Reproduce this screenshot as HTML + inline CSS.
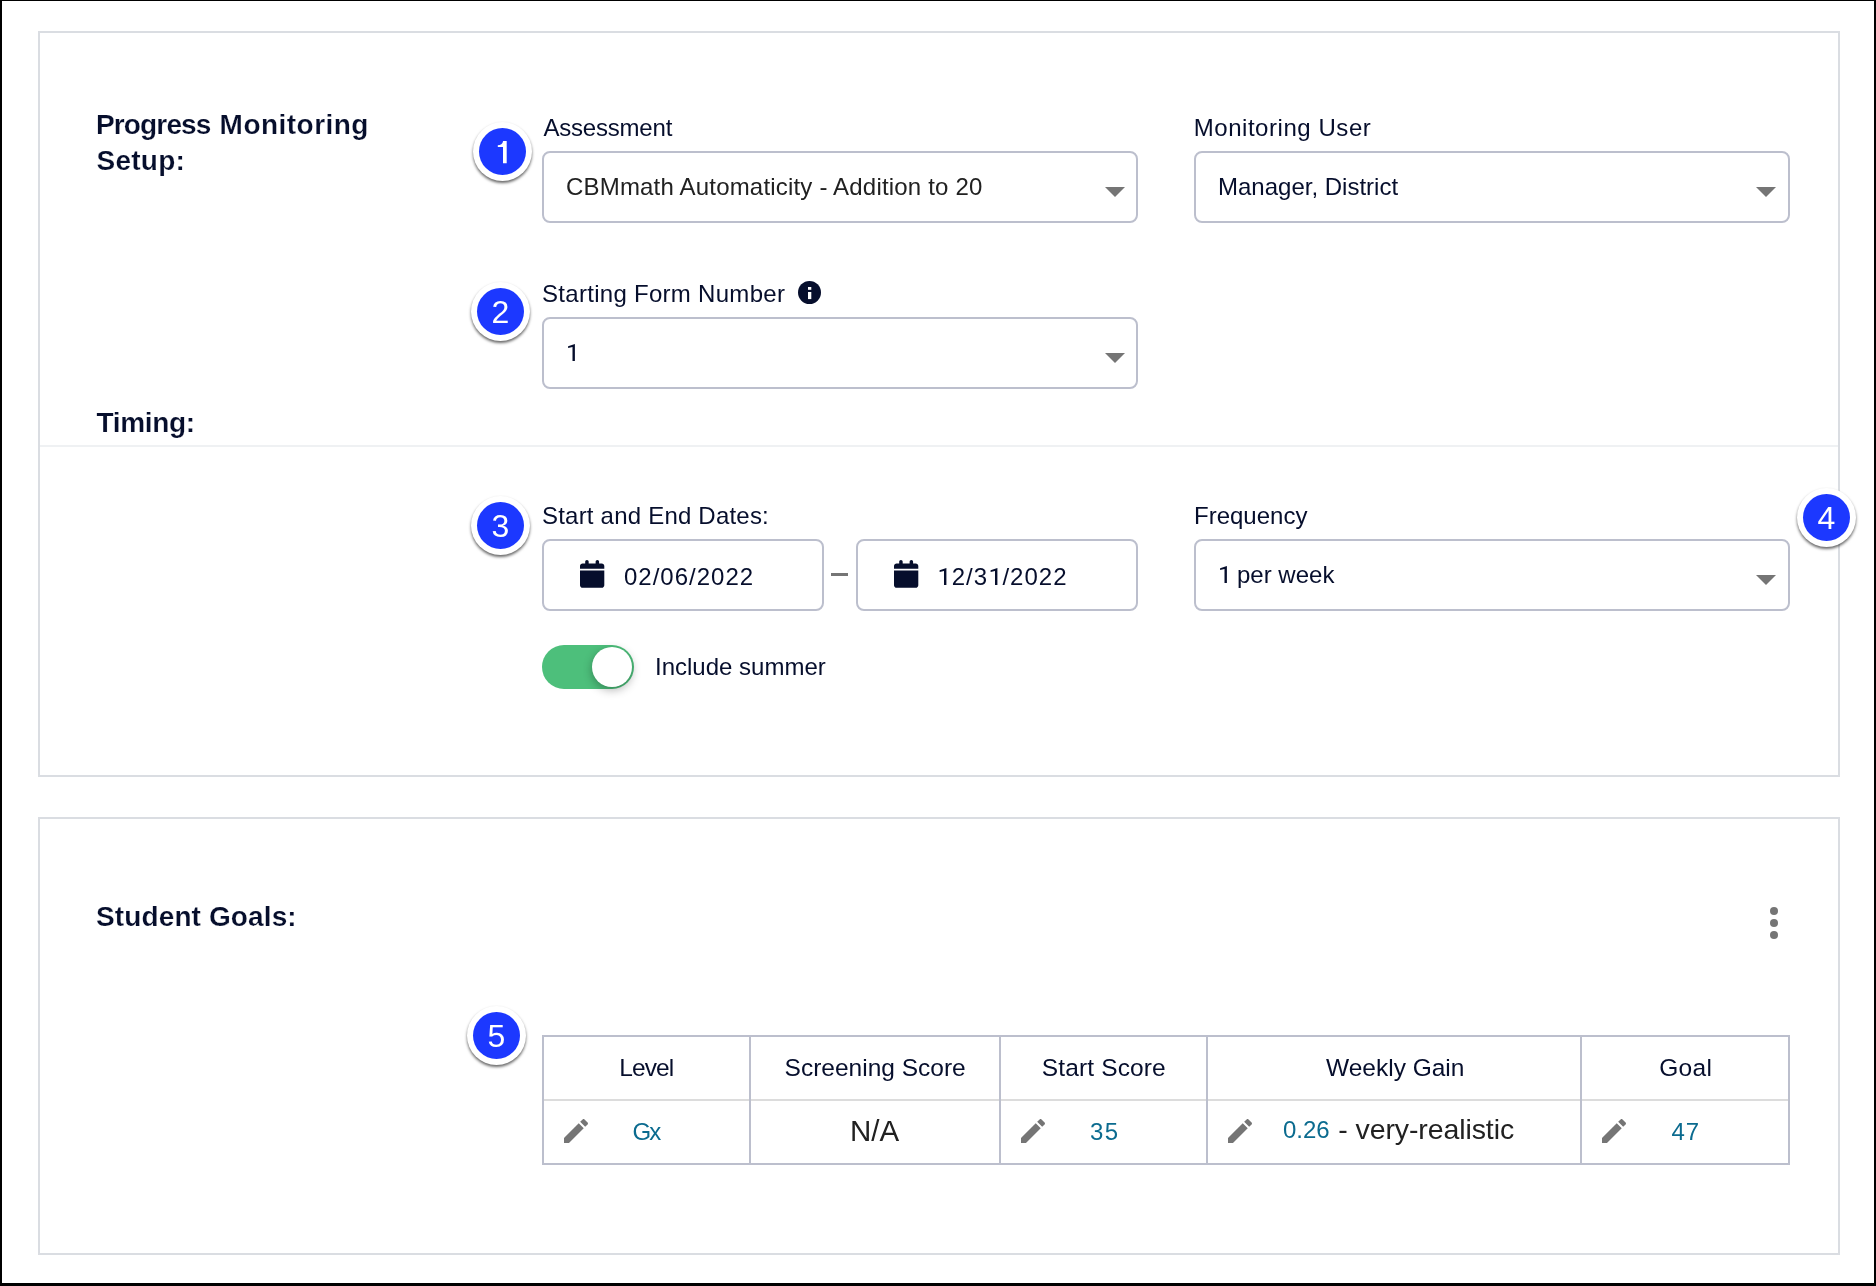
<!DOCTYPE html>
<html><head><meta charset="utf-8"><style>
html,body{margin:0;padding:0;}
body{width:1876px;height:1286px;position:relative;overflow:hidden;background:#000;font-family:"Liberation Sans",sans-serif;}
#pg{position:absolute;left:2px;top:1px;width:1872px;height:1282px;background:#fff;}
#tx{position:absolute;left:0;top:0;width:1876px;height:1286px;will-change:transform;}
.t{position:absolute;white-space:nowrap;line-height:1;}
.b{position:absolute;box-sizing:content-box;}
.ic{position:absolute;overflow:visible;}
.one{display:inline-block;vertical-align:baseline;}
.badge{position:absolute;width:59px;height:59px;border-radius:50%;background:#fff;box-shadow:0 2px 3px rgba(0,0,0,.6);will-change:transform;}
.bi{position:absolute;left:6px;top:6px;width:47px;height:47px;border-radius:50%;background:#1c38ff;}
.bd{position:absolute;left:0;top:0;width:59px;height:59px;line-height:59px;text-align:center;color:#fff;font-size:32px;padding-top:0.5px;box-sizing:border-box;}
</style></head><body>
<div id="pg"></div>
<div class="b" style="left:38px;top:31px;width:1798px;height:742px;border:2px solid #dadde2;border-radius:0px;background:#fff;"></div>
<div class="b" style="left:40px;top:445px;width:1798px;height:2px;background:#eff1f3"></div>
<div class="b" style="left:38px;top:817px;width:1798px;height:434px;border:2px solid #dadde2;border-radius:0px;background:#fff;"></div>
<div class="b" style="left:542px;top:151px;width:592px;height:68px;border:2px solid #bcbfcd;border-radius:8px;background:#fff;"></div>
<svg class="ic" style="left:1104.5px;top:187px" width="20" height="10" viewBox="0 0 20 10"><path d="M0 0H20L10 10Z" fill="#757575"/></svg>
<div class="b" style="left:1194px;top:151px;width:592px;height:68px;border:2px solid #bcbfcd;border-radius:8px;background:#fff;"></div>
<svg class="ic" style="left:1756px;top:187px" width="20" height="10" viewBox="0 0 20 10"><path d="M0 0H20L10 10Z" fill="#757575"/></svg>
<div class="b" style="left:542px;top:317px;width:592px;height:68px;border:2px solid #bcbfcd;border-radius:8px;background:#fff;"></div>
<svg class="ic" style="left:1104.5px;top:353px" width="20" height="10" viewBox="0 0 20 10"><path d="M0 0H20L10 10Z" fill="#757575"/></svg>
<div class="b" style="left:542px;top:539px;width:278px;height:68px;border:2px solid #bcbfcd;border-radius:8px;background:#fff;"></div>
<svg class="ic" style="left:580.2px;top:560.3px" width="24.3" height="27.8" viewBox="0 0 448 512"><path d="M96 32V64H48C21.5 64 0 85.5 0 112v48H448V112c0-26.5-21.5-48-48-48H352V32c0-17.7-14.3-32-32-32s-32 14.3-32 32V64H160V32c0-17.7-14.3-32-32-32S96 14.3 96 32zM448 192H0V464c0 26.5 21.5 48 48 48H400c26.5 0 48-21.5 48-48V192z" fill="#060e2c"/></svg>
<div class="b" style="left:856px;top:539px;width:278px;height:68px;border:2px solid #bcbfcd;border-radius:8px;background:#fff;"></div>
<svg class="ic" style="left:893.8px;top:560.3px" width="24.3" height="27.8" viewBox="0 0 448 512"><path d="M96 32V64H48C21.5 64 0 85.5 0 112v48H448V112c0-26.5-21.5-48-48-48H352V32c0-17.7-14.3-32-32-32s-32 14.3-32 32V64H160V32c0-17.7-14.3-32-32-32S96 14.3 96 32zM448 192H0V464c0 26.5 21.5 48 48 48H400c26.5 0 48-21.5 48-48V192z" fill="#060e2c"/></svg>
<div class="b" style="left:831px;top:573px;width:17px;height:3px;background:#757575"></div>
<div class="b" style="left:1194px;top:539px;width:592px;height:68px;border:2px solid #bcbfcd;border-radius:8px;background:#fff;"></div>
<svg class="ic" style="left:1756px;top:575px" width="20" height="10" viewBox="0 0 20 10"><path d="M0 0H20L10 10Z" fill="#757575"/></svg>
<svg class="ic" style="left:798px;top:281.2px" width="23" height="23" viewBox="0 0 23 23"><circle cx="11.5" cy="11.5" r="11.5" fill="#060e2c"/><rect x="10" y="6" width="3.3" height="2.8" fill="#fff"/><rect x="10" y="11" width="3.3" height="7.1" fill="#fff"/></svg>
<div class="b" style="left:542px;top:645px;width:92px;height:44px;border-radius:22px;background:#4dbf7b"></div>
<div class="b" style="left:592px;top:647px;width:40px;height:40px;border-radius:50%;background:#fff;box-shadow:0 3px 10px rgba(0,0,0,.3)"></div>
<div class="b" style="left:1770px;top:907px;width:8px;height:8px;border-radius:50%;background:#757575"></div>
<div class="b" style="left:1770px;top:919px;width:8px;height:8px;border-radius:50%;background:#757575"></div>
<div class="b" style="left:1770px;top:931px;width:8px;height:8px;border-radius:50%;background:#757575"></div>
<div class="b" style="left:542px;top:1035px;width:1244px;height:126px;border:2px solid #bcbfcd;border-radius:0px;background:#fff;"></div>
<div class="b" style="left:544px;top:1099px;width:1244px;height:2px;background:#dcdcdc"></div>
<div class="b" style="left:749px;top:1037px;width:2px;height:126px;background:#bcbfcd"></div>
<div class="b" style="left:999px;top:1037px;width:2px;height:126px;background:#bcbfcd"></div>
<div class="b" style="left:1206px;top:1037px;width:2px;height:126px;background:#bcbfcd"></div>
<div class="b" style="left:1580px;top:1037px;width:2px;height:126px;background:#bcbfcd"></div>
<svg class="ic" style="left:560px;top:1115px" width="32" height="32" viewBox="0 0 24 24"><path d="M3 17.25V21h3.75L17.81 9.94l-3.75-3.75L3 17.25zM20.71 7.04c.39-.39.39-1.02 0-1.41l-2.34-2.34c-.39-.39-1.02-.39-1.41 0l-1.83 1.83 3.75 3.75 1.83-1.83z" fill="#757575"/></svg>
<svg class="ic" style="left:1017px;top:1115px" width="32" height="32" viewBox="0 0 24 24"><path d="M3 17.25V21h3.75L17.81 9.94l-3.75-3.75L3 17.25zM20.71 7.04c.39-.39.39-1.02 0-1.41l-2.34-2.34c-.39-.39-1.02-.39-1.41 0l-1.83 1.83 3.75 3.75 1.83-1.83z" fill="#757575"/></svg>
<svg class="ic" style="left:1224px;top:1115px" width="32" height="32" viewBox="0 0 24 24"><path d="M3 17.25V21h3.75L17.81 9.94l-3.75-3.75L3 17.25zM20.71 7.04c.39-.39.39-1.02 0-1.41l-2.34-2.34c-.39-.39-1.02-.39-1.41 0l-1.83 1.83 3.75 3.75 1.83-1.83z" fill="#757575"/></svg>
<svg class="ic" style="left:1598px;top:1115px" width="32" height="32" viewBox="0 0 24 24"><path d="M3 17.25V21h3.75L17.81 9.94l-3.75-3.75L3 17.25zM20.71 7.04c.39-.39.39-1.02 0-1.41l-2.34-2.34c-.39-.39-1.02-.39-1.41 0l-1.83 1.83 3.75 3.75 1.83-1.83z" fill="#757575"/></svg>
<div class="badge" style="left:473.0px;top:121.80000000000001px;"><div class="bi"></div><svg style="position:absolute;left:0;top:0" width="59" height="59"><path d="M30.10 18.90 L33.70 18.90 L33.70 41.30 L30.00 41.30 L30.00 25.10 L24.80 25.10 L24.80 23.20 C27.60 23.10 29.60 21.80 30.10 18.90 Z" fill="#fff"/></svg></div>
<div class="badge" style="left:471.0px;top:282.0px;"><div class="bi"></div><div class="bd">2</div></div>
<div class="badge" style="left:471.0px;top:495.70000000000005px;"><div class="bi"></div><div class="bd">3</div></div>
<div class="badge" style="left:1797.0px;top:487.79999999999995px;"><div class="bi"></div><div class="bd">4</div></div>
<div class="badge" style="left:467.1px;top:1006.0px;"><div class="bi"></div><div class="bd">5</div></div>
<div id="tx">
<div class="t" style="left:96px;top:111.20px;font-size:28px;color:#060e2c;font-weight:700;-webkit-text-stroke:0.2px #fff;letter-spacing:-0.86px;">Progress</div>
<div class="t" style="left:219.6px;top:111.20px;font-size:28px;color:#060e2c;font-weight:700;-webkit-text-stroke:0.2px #fff;letter-spacing:0.47px;">Monitoring</div>
<div class="t" style="left:96.5px;top:146.70px;font-size:28px;color:#060e2c;font-weight:700;-webkit-text-stroke:0.2px #fff;letter-spacing:0.25px;">Setup:</div>
<div class="t" style="left:96.5px;top:408.80px;font-size:28px;color:#060e2c;font-weight:700;-webkit-text-stroke:0.2px #fff;letter-spacing:-0.33px;">Timing:</div>
<div class="t" style="left:96px;top:902.70px;font-size:28px;color:#060e2c;font-weight:700;-webkit-text-stroke:0.2px #fff;letter-spacing:0.12px;">Student Goals:</div>
<div class="t" style="left:543.4px;top:115.60px;font-size:24px;color:#060e2c;letter-spacing:-0.2px;">Assessment</div>
<div class="t" style="left:1193.7px;top:115.60px;font-size:24px;color:#060e2c;letter-spacing:0.55px;">Monitoring User</div>
<div class="t" style="left:542px;top:282.00px;font-size:24px;color:#060e2c;letter-spacing:0.29px;">Starting Form Number</div>
<div class="t" style="left:542px;top:503.60px;font-size:24px;color:#060e2c;letter-spacing:0.21px;">Start and End Dates:</div>
<div class="t" style="left:1194px;top:503.60px;font-size:24px;color:#060e2c;">Frequency</div>
<div class="t" style="left:655px;top:654.60px;font-size:24px;color:#060e2c;">Include summer</div>
<div class="t" style="left:566px;top:175.00px;font-size:24px;color:#212121;letter-spacing:0.19px;">CBMmath Automaticity - Addition to 20</div>
<div class="t" style="left:1218px;top:174.60px;font-size:24px;color:#060e2c;">Manager, District</div>
<div class="t" style="left:565px;top:340.60px;font-size:24px;color:#060e2c;"><svg class="one" style="" width="13.35" height="20" viewBox="0 0 13.35 20"><path d="M9.90 3.00 L3.10 5.30 L3.10 7.00 L7.50 5.90 L7.50 20.00 L9.90 20.00 Z" fill="#060e2c"/></svg></div>
<div class="t" style="left:624px;top:564.60px;font-size:24px;color:#060e2c;letter-spacing:1px;">02/06/2022</div>
<div class="t" style="left:937.4px;top:564.60px;font-size:24px;color:#060e2c;letter-spacing:1px;"><svg class="one" style="margin-right:1px;" width="13.35" height="20" viewBox="0 0 13.35 20"><path d="M9.40 3.00 L2.60 5.30 L2.60 7.00 L7.00 5.90 L7.00 20.00 L9.40 20.00 Z" fill="#060e2c"/></svg>2/3<svg class="one" style="margin-right:1px;" width="13.35" height="20" viewBox="0 0 13.35 20"><path d="M9.40 3.00 L2.60 5.30 L2.60 7.00 L7.00 5.90 L7.00 20.00 L9.40 20.00 Z" fill="#060e2c"/></svg>/2022</div>
<div class="t" style="left:1217px;top:562.60px;font-size:24px;color:#060e2c;"><svg class="one" style="" width="13.35" height="20" viewBox="0 0 13.35 20"><path d="M9.90 3.00 L3.10 5.30 L3.10 7.00 L7.50 5.90 L7.50 20.00 L9.90 20.00 Z" fill="#060e2c"/></svg> per week</div>
<div class="t" style="left:619.3px;top:1056.17px;font-size:24.5px;color:#060e2c;letter-spacing:-0.9px;">Level</div>
<div class="t" style="left:784.6px;top:1056.17px;font-size:24.5px;color:#060e2c;">Screening Score</div>
<div class="t" style="left:1041.8px;top:1056.17px;font-size:24.5px;color:#060e2c;letter-spacing:0.14px;">Start Score</div>
<div class="t" style="left:1326px;top:1056.17px;font-size:24.5px;color:#060e2c;">Weekly Gain</div>
<div class="t" style="left:1659.2px;top:1056.17px;font-size:24.5px;color:#060e2c;letter-spacing:0.3px;">Goal</div>
<div class="t" style="left:632.5px;top:1120.20px;font-size:24px;color:#0b6b8f;letter-spacing:-2px;">Gx</div>
<div class="t" style="left:850px;top:1115.92px;font-size:29.5px;color:#212121;">N/A</div>
<div class="t" style="left:1090px;top:1119.60px;font-size:24px;color:#0b6b8f;letter-spacing:1.4px;">35</div>
<div class="t" style="left:1283px;top:1117.60px;font-size:24px;color:#0b6b8f;">0.26</div>
<div class="t" style="left:1338.3px;top:1114.78px;font-size:28.5px;color:#212121;letter-spacing:-0.1px;">- very-realistic</div>
<div class="t" style="left:1671.6px;top:1119.60px;font-size:24px;color:#0b6b8f;letter-spacing:0.9px;">47</div>
</div>
</body></html>
